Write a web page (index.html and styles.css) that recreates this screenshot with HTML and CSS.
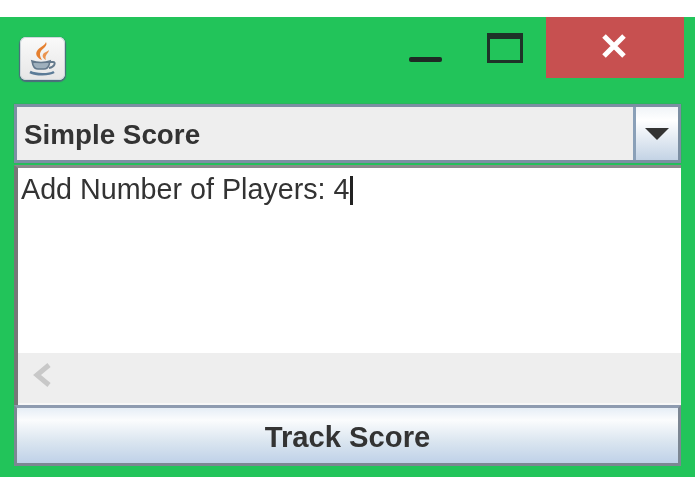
FILE: index.html
```html
<!doctype html>
<html>
<head>
<meta charset="utf-8">
<title>Simple Score</title>
<link rel="stylesheet" href="styles.css">
</head>

<body>
<div class="window">
	<div class="titlebar">
		<div class="appicon">
			<svg width="45" height="43" viewBox="0 0 45 43">
				<path d="M26 5c2 4-3 6-5 9-2 3-1 6 1 9-5-2-7-6-5-9 2-4 8-5 9-9z" fill="#e57f2e"/>
				<path d="M29 13c0 3-5 5-3 10-4-2-4-5-2-7 2-1 4-2 5-3z" fill="#ea9450"/>
				<path d="M12 24c5 2 13 2 18 0l-1 4c-1 3-3 4-5 4h-6c-2 0-4-1-5-4z" fill="#9fb0bd" stroke="#64798c" stroke-width="1.6"/>
				<path d="M30 25h3c3 0 2 5-4 6" fill="none" stroke="#64798c" stroke-width="2"/>
				<path d="M10 35c6 3 19 3 24 0" fill="none" stroke="#5b7b97" stroke-width="2.6"/>
			</svg>
		</div>
		<div class="minbtn"></div>
		<div class="maxbtn"></div>
		<div class="closebtn">
			<svg width="26" height="24" viewBox="0 0 26 24">
				<path d="M3 2l20 20M23 2L3 22" stroke="#fff" stroke-width="5"/>
			</svg>
		</div>
	</div>
	<div class="combo">
		<div class="combotext">Simple Score</div>
		<div class="comboarrow"><span class="tri"></span></div>
	</div>
	<div class="textbox">
		<div class="textline">Add Number of Players: 4<span class="caret"></span></div>
		<div class="hscroll">
			<svg width="20" height="26" viewBox="0 0 20 26">
				<path d="M17 3L5 13l12 10" fill="none" stroke="#c8c8c8" stroke-width="5"/>
			</svg>
		</div>
	</div>
	<div class="trackbtn">Track Score</div>
</div>
</body>
</html>
```

FILE: styles.css
```css
*{margin:0;padding:0;box-sizing:border-box;}
body{background:#fff;padding-top:17px;font-family:'Liberation Sans',Arial,sans-serif;}
.window{width:695px;height:460px;background:#22c45a;padding:0 14px 11px;display:flex;flex-direction:column;filter:blur(.6px);}
.titlebar{height:87px;display:flex;align-items:flex-start;padding-left:6px;margin-right:-3px;flex:none;}
.appicon{width:45px;height:43px;margin-top:20px;border-radius:6px;background:linear-gradient(#fafafa,#e6e6e6);box-shadow:inset 0 0 0 1px #cfd6dc,0 1px 1px 1px #4d6b7d;}
.minbtn{width:33px;height:5px;margin:40px 0 0 344px;background:#1e2a24;border-radius:2px;}
.maxbtn{width:36px;height:30px;margin:16px 0 0 45px;border:3px solid #1e3328;border-top-width:6px;}
.closebtn{width:138px;height:61px;margin-left:23px;background:#c75050;display:flex;align-items:center;justify-content:center;padding-bottom:3px;padding-right:2px;}
.combo{height:59px;flex:none;display:flex;border:3px solid #7c8fa3;background:#eee;box-shadow:0 0 1px #4f7a66;}
.combotext{flex:1;padding-left:7px;font-size:27.8px;font-weight:bold;line-height:55px;color:#333;}
.comboarrow{width:45px;border-left:3px solid #8aa0b8;background:linear-gradient(#f0f4f8,#fff 25%,#c3d3e5);display:flex;align-items:center;justify-content:center;}
.tri{width:0;height:0;border-left:12px solid transparent;border-right:12px solid transparent;border-top:12px solid #333;}
.textbox{flex:1;display:flex;flex-direction:column;margin-top:2px;background:#fff;border-top:3px solid #8a8a8a;border-left:4px solid #777;}
.textline{flex:1;padding-left:3px;font-size:28.7px;line-height:42px;color:#333;white-space:nowrap;}
.caret{display:inline-block;width:3px;height:29px;background:#222;margin-left:1px;vertical-align:-6px;}
.hscroll{height:52px;background:#eee;border-bottom:2px solid #f7f7f7;padding-left:14px;display:flex;align-items:center;padding-bottom:6px;}
.trackbtn{height:61px;flex:none;border:3px solid #7c8793;border-top-color:#8e9bb0;background:linear-gradient(#e6eef6,#fbfcfd 22%,#dbe6f0 60%,#bfd1e8);font-size:29.2px;font-weight:bold;line-height:58px;text-align:center;color:#333;}
```
